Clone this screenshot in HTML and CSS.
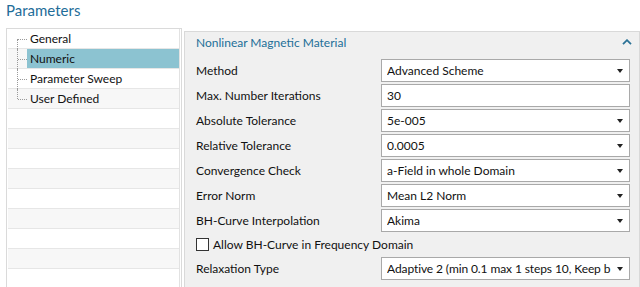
FILE: index.html
```html
<!DOCTYPE html>
<html>
<head>
<meta charset="utf-8">
<link rel="stylesheet" href="styles.css">
</head>
<body>
<div class="title">Parameters</div>
<div class="main">
  <div class="tree">
    <div class="tree-list">
      <div class="row"><span class="conn first"></span><span class="node">General</span></div>
      <div class="row alt"><span class="conn mid"></span><span class="node selected">Numeric</span></div>
      <div class="row"><span class="conn mid"></span><span class="node">Parameter Sweep</span></div>
      <div class="row alt"><span class="conn last"></span><span class="node">User Defined</span></div>
      <div class="row"></div>
      <div class="row alt"></div>
      <div class="row"></div>
      <div class="row alt"></div>
      <div class="row"></div>
      <div class="row alt"></div>
      <div class="row"></div>
      <div class="row alt"></div>
      <div class="row"></div>
    </div>
  </div>
  <div class="panel">
    <div class="panel-head">
      <span class="panel-title">Nonlinear Magnetic Material</span>
      <svg class="chevron" width="10" height="6" viewBox="0 0 10 6"><path d="M1 5.2 L5 1.2 L9 5.2" fill="none" stroke="#2b7296" stroke-width="1.8"/></svg>
    </div>
    <div class="form">
      <div class="label">Method</div>
      <div class="field"><span class="val">Advanced Scheme</span><span class="caret"></span></div>
      <div class="label">Max. Number Iterations</div>
      <div class="field"><span class="val">30</span></div>
      <div class="label">Absolute Tolerance</div>
      <div class="field"><span class="val">5e-005</span><span class="caret"></span></div>
      <div class="label">Relative Tolerance</div>
      <div class="field"><span class="val">0.0005</span><span class="caret"></span></div>
      <div class="label">Convergence Check</div>
      <div class="field"><span class="val">a-Field in whole Domain</span><span class="caret"></span></div>
      <div class="label">Error Norm</div>
      <div class="field"><span class="val">Mean L2 Norm</span><span class="caret"></span></div>
      <div class="label">BH-Curve Interpolation</div>
      <div class="field"><span class="val">Akima</span><span class="caret"></span></div>
      <label class="check-row"><span class="checkbox"></span><span>Allow BH-Curve in Frequency Domain</span></label>
      <div class="label">Relaxation Type</div>
      <div class="field"><span class="val tight">Adaptive 2 (min 0.1 max 1 steps 10, Keep b</span><span class="caret"></span></div>
    </div>
  </div>
</div>
</body>
</html>
```

FILE: styles.css
```css
html, body {
  margin: 0;
  padding: 0;
  background: #ffffff;
}
body {
  width: 640px;
  height: 287px;
  overflow: hidden;
  font-family: Lato, "Noto Sans", sans-serif;
  font-size: 12px;
  color: #111111;
}
.title {
  height: 28px;
  padding-left: 6px;
  font-size: 15px;
  line-height: 20px;
  color: #1f6d99;
}
.main {
  display: flex;
  padding-left: 6px;
  height: 259px;
}
.tree {
  width: 176px;
  box-sizing: border-box;
  border: 1px solid #dadada;
  border-bottom: none;
  padding: 0 1px;
  background: #fff;
}
.tree-list {
  border-right: 1px solid #e2e2e2;
  height: 100%;
}
.row {
  height: 19px;
  border-bottom: 1px solid #e6e6e6;
  display: flex;
  background: #ffffff;
}
.row.alt {
  background: #f7f7f7;
}
.conn {
  width: 19px;
  position: relative;
  flex: none;
}
.conn::before {
  content: "";
  position: absolute;
  left: 9px;
  border-left: 1px dotted #9a9a9a;
}
.conn::after {
  content: "";
  position: absolute;
  left: 10px;
  top: 10px;
  width: 9px;
  border-top: 1px dotted #9a9a9a;
}
.conn.first::before { top: 10px; bottom: -1px; }
.conn.mid::before { top: 0; bottom: -1px; }
.conn.last::before { top: 0; height: 10px; }
.node {
  flex: 1;
  padding-left: 3px;
  line-height: 19px;
  white-space: nowrap;
}
.node.selected {
  background: #8cc3d1;
}
.panel {
  flex: 1;
  margin-left: 2px;
  margin-top: 3px;
  border: 1px solid #d9d9d9;
  border-bottom: none;
  background: #f0f0f0;
  padding: 0 9px 0 11px;
}
.panel-head {
  height: 20px;
  display: flex;
  align-items: center;
  justify-content: space-between;
}
.panel-title {
  color: #236f98;
  font-size: 12px;
}
.chevron {
  margin-right: -2px;
  margin-top: -1px;
}
.form {
  margin-top: 7px;
  display: grid;
  grid-template-columns: 185px 1fr;
  grid-template-rows: repeat(7, 23px) 21px 23px;
  row-gap: 2px;
}
.label {
  display: flex;
  align-items: center;
  white-space: nowrap;
}
.field {
  box-sizing: border-box;
  border: 1px solid #a9a9a9;
  background: #fff;
  display: flex;
  align-items: center;
  padding: 0 5px;
  min-width: 0;
}
.val {
  flex: 1;
  min-width: 0;
  overflow: hidden;
  white-space: nowrap;
}
.val.tight {
  letter-spacing: -0.1px;
}
.caret {
  flex: none;
  margin-left: 4px;
  width: 0;
  height: 0;
  border-left: 3.5px solid transparent;
  border-right: 3.5px solid transparent;
  border-top: 4px solid #222;
  margin-right: 1px;
}
.check-row {
  grid-column: 1 / 3;
  display: flex;
  align-items: center;
  gap: 4px;
}
.checkbox {
  width: 13px;
  height: 13px;
  box-sizing: border-box;
  border: 1px solid #333;
  background: #fff;
}
```
